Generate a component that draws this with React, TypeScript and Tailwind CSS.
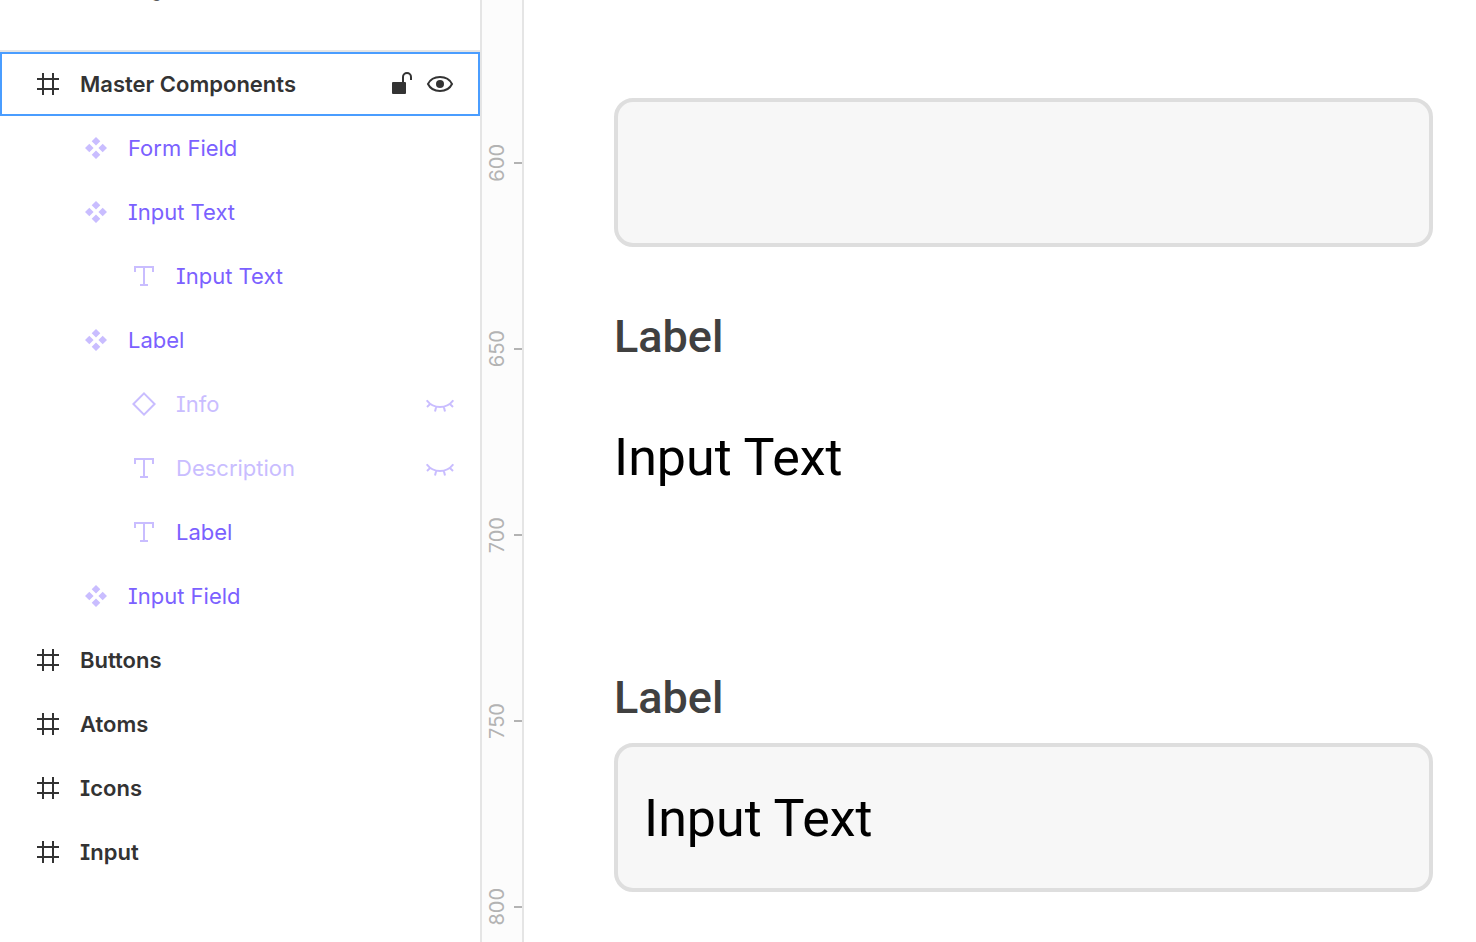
import React from "react";

type Kind = "frame" | "component" | "text" | "instance";

type Layer = {
  id: string;
  name: string;
  kind: Kind;
  depth: 0 | 1 | 2;
  selected?: boolean;
  hidden?: boolean;
};

const layers: Layer[] = [
  { id: "master", name: "Master Components", kind: "frame", depth: 0, selected: true },
  { id: "form-field", name: "Form Field", kind: "component", depth: 1 },
  { id: "input-text", name: "Input Text", kind: "component", depth: 1 },
  { id: "input-text-text", name: "Input Text", kind: "text", depth: 2 },
  { id: "label", name: "Label", kind: "component", depth: 1 },
  { id: "info", name: "Info", kind: "instance", depth: 2, hidden: true },
  { id: "description", name: "Description", kind: "text", depth: 2, hidden: true },
  { id: "label-text", name: "Label", kind: "text", depth: 2 },
  { id: "input-field", name: "Input Field", kind: "component", depth: 1 },
  { id: "buttons", name: "Buttons", kind: "frame", depth: 0 },
  { id: "atoms", name: "Atoms", kind: "frame", depth: 0 },
  { id: "icons", name: "Icons", kind: "frame", depth: 0 },
  { id: "input", name: "Input", kind: "frame", depth: 0 },
];

const indent = { 0: "pl-[34px]", 1: "pl-[82px]", 2: "pl-[130px]" };

function KindIcon({ kind }: { kind: Kind }) {
  return (
    <svg
      viewBox="0 0 24 24"
      className={kind === "frame" ? "size-6 shrink-0 text-[#333333]" : "size-6 shrink-0 text-[#c9bdff]"}
      aria-hidden="true"
    >
      {kind === "frame" && (
        <path d="M1 7h22M1 17h22M7 1v22M17 1v22" fill="none" stroke="currentColor" strokeWidth="2" />
      )}
      {kind === "component" && (
        <path
          d="M12 1l4.3 4.3L12 9.6 7.7 5.3zM12 14.4l4.3 4.3L12 23l-4.3-4.3zM5.3 7.7L9.6 12l-4.3 4.3L1 12zM18.7 7.7L23 12l-4.3 4.3L14.4 12z"
          fill="currentColor"
        />
      )}
      {kind === "text" && (
        <path d="M3 8V3h18v5M12 3v18M8 21h8" fill="none" stroke="currentColor" strokeWidth="2" />
      )}
      {kind === "instance" && (
        <path d="M12 1.4L22.6 12 12 22.6 1.4 12z" fill="none" stroke="currentColor" strokeWidth="2" />
      )}
    </svg>
  );
}

function UnlockIcon() {
  return (
    <svg viewBox="0 0 24 24" className="size-6" aria-hidden="true">
      <rect x="2" y="10" width="14" height="12" rx="1" fill="#333333" />
      <path d="M13 11V5a4 4 0 0 1 8 0v3" fill="none" stroke="#333333" strokeWidth="2" />
    </svg>
  );
}

function EyeIcon() {
  return (
    <svg viewBox="0 0 28 24" className="h-6 w-7" aria-hidden="true">
      <path
        d="M2 12C4.2 7.400 8.600 5 14 5s9.800 2.400 12 7c-2.200 4.600-6.600 7-12 7S4.200 16.600 2 12z"
        fill="none"
        stroke="#333333"
        strokeWidth="2"
      />
      <circle cx="14" cy="12" r="4" fill="#333333" />
    </svg>
  );
}

function ClosedEyeIcon() {
  return (
    <svg viewBox="0 0 28 24" className="h-6 w-7" aria-hidden="true">
      <path
        d="M.7 8.300C4 12.600 8.600 15 14 15s10-2.400 13.300-6.700M4.500 11.600L1 15M23.500 11.600L27 15M10.200 14.800L9 19.500M17.800 14.800L19 19.500"
        fill="none"
        stroke="#c9bdff"
        strokeWidth="2"
      />
    </svg>
  );
}

function LayerRow({ layer }: { layer: Layer }) {
  const color =
    layer.kind === "frame"
      ? "font-semibold text-[#333333]"
      : layer.hidden
        ? "text-[#c9bdff]"
        : "text-[#7b61ff]";
  return (
    <li
      className={
        layer.selected
          ? "flex h-16 items-center border-2 border-[#4a9dff] pr-6"
          : "flex h-16 items-center border-2 border-transparent pr-6"
      }
    >
      <button type="button" className={`flex h-full grow items-center gap-5 text-left ${indent[layer.depth]}`}>
        <KindIcon kind={layer.kind} />
        <span className={`whitespace-nowrap ${color}`}>{layer.name}</span>
      </button>
      {layer.selected && (
        <span className="flex gap-3">
          <button type="button" aria-label="Lock layer">
            <UnlockIcon />
          </button>
          <button type="button" aria-label="Hide layer">
            <EyeIcon />
          </button>
        </span>
      )}
      {layer.hidden && (
        <button type="button" aria-label="Show layer">
          <ClosedEyeIcon />
        </button>
      )}
    </li>
  );
}

function LayersPanel() {
  return (
    <aside className="w-[482px] shrink-0 overflow-hidden border-r-2 border-[#e5e5e5] font-['Inter',sans-serif] text-[22px] leading-8 [font-feature-settings:'cv08']">
      <div className="h-[52px] overflow-hidden border-b-2 border-[#e5e5e5] pl-[150px] text-[#333333]">
        <span className="-mt-7 block">g</span>
      </div>
      <ul>
        {layers.map((layer) => (
          <LayerRow key={layer.id} layer={layer} />
        ))}
      </ul>
    </aside>
  );
}

function Ruler() {
  return (
    <div className="flex w-[42px] shrink-0 flex-col gap-[146px] overflow-hidden border-r-2 border-[#e5e5e5] bg-[#fcfcfc] pt-[143px] font-['Inter',sans-serif] text-xl leading-6 text-[#b3b3b3]">
      {[600, 650, 700, 750, 800].map((mark) => (
        <div key={mark} className="flex h-10 shrink-0 items-center justify-between pl-[3px]">
          <span className="rotate-180 [writing-mode:vertical-rl]">{mark}</span>
          <span className="h-0.5 w-2 bg-[#b3b3b3]" />
        </div>
      ))}
    </div>
  );
}

const field =
  "block h-[149px] w-full rounded-[19px] border-4 border-[#dedede] bg-[#f7f7f7] px-[26px] pt-0.5 text-[52px] text-black outline-none";

function Canvas() {
  return (
    <main className="min-w-0 grow pt-[98px] pr-[43px] pl-[90px] font-['Roboto',sans-serif]">
      <input type="text" aria-label="Form field" className={field} />
      <p className="mt-16 text-[45px] leading-[52px] font-medium text-[#404040]">Label</p>
      <p className="mt-[65px] text-[52px] leading-[60px] text-black">Input Text</p>
      <label
        htmlFor="sample-field"
        className="mt-[184px] block text-[45px] leading-[52px] font-medium text-[#404040]"
      >
        Label
      </label>
      <input id="sample-field" type="text" defaultValue="Input Text" className={`mt-[19px] ${field}`} />
    </main>
  );
}

export default function App() {
  return (
    <div className="flex h-screen overflow-hidden bg-white">
      <LayersPanel />
      <Ruler />
      <Canvas />
    </div>
  );
}
